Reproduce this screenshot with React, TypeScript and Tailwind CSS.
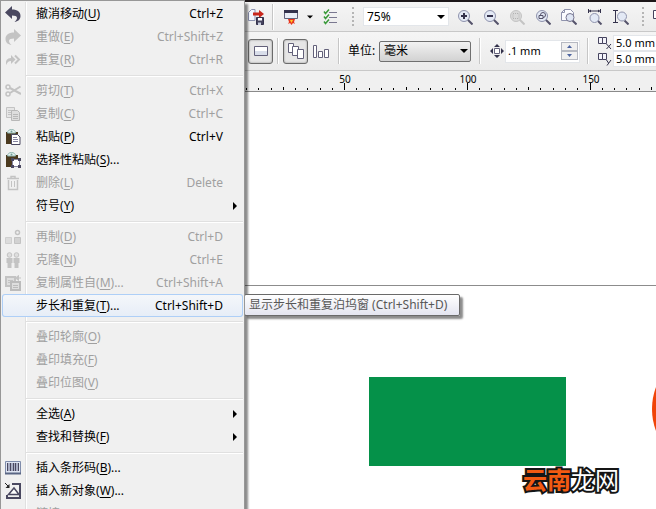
import type {ReactNode} from 'react';

interface MenuEntry {
  label: string;
  hotkey: string;
  suffix?: string;
  shortcut?: string;
  icon?: ReactNode;
  disabled?: boolean;
  submenu?: boolean;
  active?: boolean;
}

const DARK = '#4a4860';
const GREY = '#c3c3c3';

function Glyph({children, size = 16}: {children: ReactNode; size?: number}) {
  return (
    <svg width={size} height={size} viewBox={`0 0 ${size} ${size}`} fill="none" className="shrink-0" aria-hidden="true">
      {children}
    </svg>
  );
}

const undoPath = 'M0 6.500 7 0v3.500c5.500 0 8.500 2.500 8.500 6.500 0 3.500-2.500 5.500-6 6 1.500-1.200 2.500-2.500 2.500-4 0-1.800-2-2.500-5-2.500V13z';

const clipboard = (
  <>
    <path d="M1 3h12v12H1z" fill="#4b3a1f" />
    <path d="M2.500 4C2.500 1.500 4.500.5 6.500.5s4 1 4 3.500z" fill="#e8f4f2" stroke="#8fb5b0" />
    <circle cx="6.500" cy="2.500" r="1" fill="#6d9a95" />
  </>
);

const groups: MenuEntry[][] = [
  [
    {label: '撤消移动', hotkey: 'U', shortcut: 'Ctrl+Z', icon: <Glyph><path d={undoPath} fill={DARK} /></Glyph>},
    {
      label: '重做', hotkey: 'E', shortcut: 'Ctrl+Shift+Z', disabled: true,
      icon: <Glyph><path d={undoPath} fill={GREY} transform="matrix(-1 0 0 1 16 0)" /></Glyph>,
    },
    {
      label: '重复', hotkey: 'R', shortcut: 'Ctrl+R', disabled: true,
      icon: (
        <Glyph>
          <path d="M1.500 13C0 9 2 6 6 6V3l4.500 4.500L6 12V9C3.500 9 2 10.500 1.500 13z" fill={GREY} />
          <path d="m10 3.500 4 4-4 4" stroke={GREY} strokeWidth="2" />
        </Glyph>
      ),
    },
  ],
  [
    {
      label: '剪切', hotkey: 'T', shortcut: 'Ctrl+X', disabled: true,
      icon: (
        <Glyph>
          <circle cx="3" cy="4" r="2" stroke={GREY} strokeWidth="1.500" />
          <circle cx="3" cy="11" r="2" stroke={GREY} strokeWidth="1.500" />
          <path d="m5 5 11 6M5 10l10.500-6.500" stroke={GREY} strokeWidth="2" />
        </Glyph>
      ),
    },
    {
      label: '复制', hotkey: 'C', shortcut: 'Ctrl+C', disabled: true,
      icon: (
        <Glyph>
          <path d="M1.500 1.500h8v10h-8z" fill="#e6e6e6" stroke={GREY} />
          <path d="M3 4.500h4M3 6.500h3M3 8.500h3" stroke={GREY} />
          <path d="M6.500 4.500h6l2 2v8h-8z" fill="#dedede" stroke="#b8b8b8" />
          <path d="M8 8.500h5M8 10.500h5M8 12.500h5" stroke="#b8b8b8" />
        </Glyph>
      ),
    },
    {
      label: '粘贴', hotkey: 'P', shortcut: 'Ctrl+V',
      icon: (
        <Glyph>
          {clipboard}
          <path d="M6.500 5.500h6l2.500 2.500v7.500H6.500z" fill="#fff" stroke={DARK} />
          <path d="M8 8.500h4M8 10.500h5M8 12.500h5" stroke="#8583a0" />
        </Glyph>
      ),
    },
    {
      label: '选择性粘贴', hotkey: 'S', suffix: '...',
      icon: (
        <Glyph>
          {clipboard}
          <path d="M7.500 7.500h7v7h-7z" fill="#fff" stroke="#8583a0" />
          <path d="M6 6h3v3H6zM13 6h3v3h-3zM6 13h3v3H6zM13 13h3v3h-3z" fill={DARK} />
        </Glyph>
      ),
    },
    {
      label: '删除', hotkey: 'L', shortcut: 'Delete', disabled: true,
      icon: (
        <Glyph>
          <path d="M2 3.500h12M6 3V1.500h4V3M3.500 5v9.500h9V5" stroke={GREY} strokeWidth="1.500" />
          <path d="M6.500 6v6M9.500 6v6" stroke={GREY} />
        </Glyph>
      ),
    },
    {label: '符号', hotkey: 'Y', submenu: true},
  ],
  [
    {
      label: '再制', hotkey: 'D', shortcut: 'Ctrl+D', disabled: true,
      icon: (
        <Glyph>
          <path d="M.5 8.500h6v6h-6z" fill="#dcdcdc" stroke="#cfcfcf" />
          <path d="M9.500 8.500h6v6h-6z" fill="#d2d2d2" stroke={GREY} />
          <circle cx="12.500" cy="3.500" r="2" stroke={GREY} strokeWidth="1.500" />
        </Glyph>
      ),
    },
    {
      label: '克隆', hotkey: 'N', shortcut: 'Ctrl+E', disabled: true,
      icon: (
        <Glyph>
          <circle cx="4.500" cy="3" r="2.300" fill="#dedede" stroke={GREY} />
          <circle cx="11.500" cy="3" r="2.300" fill="#dedede" stroke={GREY} />
          <path d="M1.500 6h6v5H6.500v5h-4v-5h-1zM8.500 6h6v5h-1v5h-4v-5h-1z" fill={GREY} />
        </Glyph>
      ),
    },
    {
      label: '复制属性自', hotkey: 'M', suffix: '...', shortcut: 'Ctrl+Shift+A', disabled: true,
      icon: (
        <Glyph>
          <path d="M1 2h9v9H1z" fill="#dedede" stroke={GREY} strokeWidth="2" />
          <path d="M3 5.500h5M3 7.500h3" stroke={GREY} />
          <path d="M6 7h9v8H6z" fill="#dedede" stroke="#bbb" strokeWidth="2" />
          <path d="M8 10.500h5M8 12.500h5" stroke="#bbb" />
          <path d="M16 3h-3M13.500.5 10.500 3l3 2.500z" stroke={GREY} fill={GREY} />
        </Glyph>
      ),
    },
    {label: '步长和重复', hotkey: 'T', suffix: '...', shortcut: 'Ctrl+Shift+D', active: true},
  ],
  [
    {label: '叠印轮廓', hotkey: 'O', disabled: true},
    {label: '叠印填充', hotkey: 'F', disabled: true},
    {label: '叠印位图', hotkey: 'V', disabled: true},
  ],
  [
    {label: '全选', hotkey: 'A', submenu: true},
    {label: '查找和替换', hotkey: 'F', submenu: true},
  ],
  [
    {
      label: '插入条形码', hotkey: 'B', suffix: '...',
      icon: (
        <Glyph>
          <path d="M.5 1.500h15v12H.5z" fill="#dfe5f2" stroke="#7f8cab" />
          <path d="M0 13.500h16" stroke="#5a6684" strokeWidth="2" />
          <path d="M2 3h12v8H2z" fill="#a9aec4" />
          <path d="M2.500 3v8M5.500 3v8M8.500 3v8M10.500 3v8M13.500 3v8" stroke={DARK} />
        </Glyph>
      ),
    },
    {
      label: '插入新对象', hotkey: 'W', suffix: '...',
      icon: (
        <Glyph>
          <path d="M7 1h8v14H2v-3" stroke={DARK} strokeWidth="2" />
          <path d="m9 5 5 6.500H3.500z" fill="#fff" stroke={DARK} strokeWidth="1.500" />
          <path d="m0 0 3.500 3.500" stroke="#222" />
          <path d="M4.500 1v4h-4z" fill="#222" />
        </Glyph>
      ),
    },
    {label: '链接', hotkey: 'K', suffix: '...', disabled: true},
  ],
];

function MenuRow({entry}: {entry: MenuEntry}) {
  const tone = entry.disabled ? 'text-[#a0a0a0]' : 'text-black';
  const fill = entry.active
    ? 'rounded-[3px] bg-linear-to-b from-[#f5f7fa] to-[#e6edf7] shadow-[inset_0_0_0_1px_#aecff7]'
    : '';
  return (
    <button
      type="button"
      role="menuitem"
      disabled={entry.disabled}
      className={`flex h-[23px] w-full shrink-0 items-center text-left ${tone} ${fill}`}
    >
      <span
        className={`flex h-full w-6 shrink-0 items-center pl-[3px] ${
          entry.active ? '' : 'border-r border-[#e0e0e0] shadow-[1px_0_0_#fff]'
        }`}
      >
        {entry.icon}
      </span>
      <span className="flex-1 whitespace-nowrap pl-[10px]">
        {entry.label}(<span className="underline underline-offset-2">{entry.hotkey}</span>){entry.suffix}
      </span>
      {entry.shortcut && <span className="whitespace-nowrap pr-[20px]">{entry.shortcut}</span>}
      {entry.submenu && (
        <svg width="4" height="8" viewBox="0 0 4 8" className="mr-[6px]" aria-hidden="true">
          <path d="M0 0v8l4-4z" fill="#000" />
        </svg>
      )}
    </button>
  );
}

function EditMenu() {
  return (
    <div
      role="menu"
      className="relative z-10 flex w-[245px] shrink-0 flex-col border-x border-t border-[#979797] bg-[#f0f0f0] px-px pt-px shadow-[3px_4px_2px_rgba(0,0,0,0.45)]"
    >
      {groups.map((group, i) => (
        <div key={i} role="group" className="shrink-0">
          {i > 0 && (
            <div className="flex h-2">
              <span className="w-6 border-r border-[#e0e0e0] shadow-[1px_0_0_#fff]" />
              <span className="mt-[4px] h-[2px] flex-1 border-t border-b border-t-[#e0e0e0] border-b-white" />
            </div>
          )}
          {group.map((entry) => (
            <MenuRow key={entry.label} entry={entry} />
          ))}
        </div>
      ))}
    </div>
  );
}

function Divider() {
  return <span className="h-[26px] w-[2px] shrink-0 border-l border-r border-l-[#c6c6c6] border-r-white" />;
}

function Grip() {
  return <span className="h-[19px] w-0 shrink-0 border-l-2 border-dotted border-[#b5b5b5]" />;
}

function Caret({className = ''}: {className?: string}) {
  return (
    <svg width="8" height="4" viewBox="0 0 8 4" className={`shrink-0 ${className}`} aria-hidden="true">
      <path d="M0 0h8L4 4z" fill="#000" />
    </svg>
  );
}

function ToolButton({label, children, pressed}: {label: string; children: ReactNode; pressed?: boolean}) {
  return (
    <button
      type="button"
      aria-label={label}
      aria-pressed={pressed}
      className={`flex shrink-0 items-center justify-center ${
        pressed
          ? 'size-[25px] rounded-[3px] border border-[#6b6b6b] bg-[#e6e6e6] shadow-[inset_0_0_2px_#888]'
          : 'size-[18px]'
      }`}
    >
      {children}
    </button>
  );
}

function Lens({children, faded}: {children?: ReactNode; faded?: boolean}) {
  return (
    <Glyph>
      <path d="m10.500 10.500 5 5" stroke={faded ? '#c4c4c4' : '#55536b'} strokeWidth="2" />
      <circle cx="7" cy="7" r="5.500" fill={faded ? '#dadada' : '#e3e9f5'} stroke={faded ? '#c4c4c4' : '#8f93ad'} />
      {children}
    </Glyph>
  );
}

const zoomTools = [
  {
    label: '放大',
    icon: <Lens><path d="M7 4v6M4 7h6" stroke="#34324c" strokeWidth="2" /></Lens>,
  },
  {
    label: '缩小',
    icon: <Lens><path d="M4 7h6" stroke="#34324c" strokeWidth="2" /></Lens>,
  },
  {
    label: '缩放选定对象',
    icon: <Lens faded><path d="M4 4.500h6v5H4z" stroke="#b2b2b2" strokeDasharray="1 1" /></Lens>,
  },
  {
    label: '缩放全部对象',
    icon: (
      <Lens>
        <circle cx="8" cy="6" r="2.500" stroke="#55536b" />
        <path d="M4 6.500h4v3H4z" fill="#e3e9f5" stroke="#55536b" />
      </Lens>
    ),
  },
  {
    label: '显示页面',
    icon: (
      <Glyph>
        <path d="M3.500.5h6l3 3v8h-12v-8z" fill="#fbfcff" stroke="#8f93ad" />
        <path d="M3.500.5v3h-3" stroke="#8f93ad" />
        <path d="m11.500 11.500 4 4" stroke="#55536b" strokeWidth="2" />
        <circle cx="9" cy="8.500" r="4" fill="#dfe6f4" stroke="#77758e" />
      </Glyph>
    ),
  },
  {
    label: '按页宽显示',
    icon: (
      <Glyph>
        <path d="M1.500 0v4M13.500 0v4M2 2h11" stroke="#34324c" />
        <path d="M4 .5 2 2l2 1.500zM11 .5 13 2l-2 1.500z" fill="#34324c" />
        <path d="m10.500 11.500 4 4" stroke="#55536b" strokeWidth="2" />
        <circle cx="7.500" cy="9" r="4.500" fill="#e3e9f5" stroke="#8f93ad" />
      </Glyph>
    ),
  },
  {
    label: '按页高显示',
    icon: (
      <Glyph>
        <path d="M0 1.500h5M0 13.500h5M2.500 2v11" stroke="#34324c" />
        <path d="m11.500 11.500 4 4" stroke="#55536b" strokeWidth="2" />
        <circle cx="9" cy="7.500" r="4.500" fill="#e3e9f5" stroke="#8f93ad" />
      </Glyph>
    ),
  },
];

function StandardBar() {
  return (
    <div className="flex h-[30px] shrink-0 items-center overflow-hidden border-b border-[#c8c8c8] bg-linear-to-b from-[#f5f5f5] to-[#ebebeb]">
      <div className="ml-[2px]">
        <ToolButton label="导出">
          <Glyph>
            <path d="M.5 3.500 3.500.5H7v11H.5z" fill="#f4f7ff" stroke="#8d93b0" />
            <path d="M5 3.500h6V1l5 4-5 4V6.500H5z" fill="#c8261c" />
            <path d="M8.500 8.500h7v7h-7z" fill="#45435e" stroke="#34324c" />
            <path d="M10 9h4v2.500h-4z" fill="#fff" />
            <path d="M10 13.500h3V16h-3z" fill="#c9cfdf" />
          </Glyph>
        </ToolButton>
      </div>
      <span className="ml-[7px] flex"><Divider /></span>
      <div className="ml-[8px] flex items-center">
        <ToolButton label="应用程序启动器">
          <Glyph>
            <path d="M1.500 1.500h13v8h-13z" fill="#e9edf6" stroke="#63617a" />
            <path d="M1 1h14v3H1z" fill="#34324c" />
            <path d="M5 10h7l-1 3 1 2-2-1-1.500 2L7 14l-2 1 1-2z" fill="#e8341c" />
            <path d="M7 11h3l-1.500 3z" fill="#ffc928" />
          </Glyph>
        </ToolButton>
        <Caret className="ml-[7px] w-[6px]" />
      </div>
      <div className="ml-[9px]">
        <ToolButton label="选项">
          <Glyph>
            <path d="m1 2.500 1.500 2L6 .5M1 7.500l1.500 2L6 5.500M1 12.500l1.500 2L6 10.500" stroke="#3a9a3a" strokeWidth="1.500" />
            <path d="M6 3.500h8M6 8.500h8M6 13.500h8" stroke="#7a7890" />
          </Glyph>
        </ToolButton>
      </div>
      <span className="ml-[12px] flex"><Grip /></span>
      <div className="relative ml-[9px] flex shrink-0 items-center">
        <select aria-label="缩放级别" defaultValue="75%" className="h-[19px] w-[86px] appearance-none border border-[#e3e6ea] bg-white pl-[3px] text-xs leading-4">
          <option>75%</option>
          <option>100%</option>
        </select>
        <Caret className="pointer-events-none absolute right-[4px]" />
      </div>
      <div className="ml-[7px] flex gap-[8px]">
        {zoomTools.map((tool) => (
          <ToolButton key={tool.label} label={tool.label}>{tool.icon}</ToolButton>
        ))}
      </div>
      <span className="ml-[12px] flex"><Grip /></span>
      <div className="ml-[8px]">
        <ToolButton label="贴齐">
          <Glyph><path d="M.5 1.500h9v8h-9z" fill="#fff" stroke="#45435e" /></Glyph>
        </ToolButton>
      </div>
    </div>
  );
}

function OffsetIcon({axis}: {axis: 'X' | 'Y'}) {
  return (
    <svg width="14" height="14" viewBox="0 0 14 14" fill="none" className="shrink-0" aria-hidden="true">
      <path d="M.5 1.500h4v6h-4z" fill="#f4f4fa" stroke="#45435e" />
      <path d="M4.500 1.500h4v6h-4z" fill="#f4f4fa" stroke="#45435e" />
      <path d={axis === 'X' ? 'm8.500 8 4.500 5M13 8l-4.500 5' : 'm8.500 8 2 3M13 8l-4 5.500'} stroke="#34324c" />
    </svg>
  );
}

function PropertyBar() {
  return (
    <div className="flex h-[39px] shrink-0 items-center overflow-hidden border-b border-[#c8c8c8] bg-linear-to-b from-[#f5f5f5] to-[#ebebeb]">
      <div className="ml-[3px]">
        <ToolButton label="当前页" pressed>
          <Glyph>
            <path d="M1.500 3.500h13v9h-13z" fill="#fff" stroke="#63617a" />
            <path d="M2 8h12v4H2z" fill="#d9deea" />
          </Glyph>
        </ToolButton>
      </div>
      <span className="ml-[4px] flex"><Divider /></span>
      <div className="ml-[4px] flex items-center gap-[4px]">
        <ToolButton label="所有对象" pressed>
          <Glyph>
            <path d="M.5.5h5v9h-5z" fill="#fff" stroke="#63617a" />
            <path d="M4.500 3.500h6v9h-6z" fill="#fff" stroke="#63617a" />
            <path d="M9.500 6.500h6v9h-6z" fill="#fff" stroke="#63617a" />
          </Glyph>
        </ToolButton>
        <ToolButton label="对象对齐">
          <Glyph>
            <path d="M.5 2.500h3v12h-3zM5.500 8.500h4v6h-4zM11.500 6.500h4v8h-4z" fill="#fff" stroke="#63617a" />
          </Glyph>
        </ToolButton>
      </div>
      <span className="ml-[8px] flex"><Divider /></span>
      <label htmlFor="unit" className="ml-[8px] w-[31px] shrink-0 whitespace-nowrap text-xs">单位:</label>
      <div className="relative flex shrink-0 items-center">
        <select
          id="unit"
          className="h-[21px] w-[92px] appearance-none rounded-[2px] border border-[#707070] bg-linear-to-b from-[#f2f2f2] to-[#d2d2d2] pl-[4px] text-xs leading-4"
        >
          <option>毫米</option>
          <option>英寸</option>
        </select>
        <Caret className="pointer-events-none absolute right-[3px]" />
      </div>
      <span className="ml-[8px] flex"><Divider /></span>
      <label htmlFor="nudge" aria-label="微调偏移" className="ml-[8px] shrink-0">
        <Glyph>
          <path d="M5.500 5.500h5v5h-5z" fill="#fff" stroke="#63617a" />
          <path d="m8 1 3 3H5zM8 15l3-3H5zM1 8l3-3v6zM15 8l-3-3v6z" fill="#34324c" />
        </Glyph>
      </label>
      <div className="flex h-[23px] w-[75px] shrink-0 items-center border border-[#e3e6ea] bg-white">
        <input id="nudge" defaultValue=".1 mm" className="w-[55px] pl-[2px] text-[11px] leading-4 outline-none" />
        <span className="flex flex-col">
          <button type="button" aria-label="增加" className="flex h-[9px] w-[17px] items-center justify-center border border-[#b6b9c2] bg-[#f0f0f0]">
            <svg width="5" height="3" viewBox="0 0 5 3"><path d="M0 3h5L2.500 0z" fill="#4c63a0" /></svg>
          </button>
          <button type="button" aria-label="减少" className="flex h-[9px] w-[17px] items-center justify-center border border-[#b6b9c2] bg-[#f0f0f0]">
            <svg width="5" height="3" viewBox="0 0 5 3"><path d="M0 0h5L2.500 3z" fill="#4c63a0" /></svg>
          </button>
        </span>
      </div>
      <span className="ml-[7px] flex"><Divider /></span>
      <div className="ml-[9px] flex flex-col">
        {(['X', 'Y'] as const).map((axis) => (
          <div key={axis} className="flex items-center">
            <label htmlFor={`offset${axis}`} aria-label={`再制距离 ${axis}`}><OffsetIcon axis={axis} /></label>
            <input
              id={`offset${axis}`}
              defaultValue="5.0 mm"
              className="ml-px h-4 w-[60px] border border-[#e3e6ea] bg-white pl-[2px] text-[11px] leading-4 outline-none"
            />
          </div>
        ))}
      </div>
    </div>
  );
}

// ruler: 5 mm per minor tick, labels every 50 mm
const ticks = Array.from({length: 60}, (_, i) => ({mm: 10 + i * 5, x: Math.round(1 + i * 12.27)}));

function Ruler() {
  return (
    <div className="h-[21px] shrink-0 overflow-hidden border-b border-[#8a8a8a] bg-[#f0f0f0]">
      <svg width="800" height="20" viewBox="0 0 800 20" aria-label="标尺" className="max-w-none">
        {ticks.map(({mm, x}) => {
          const top = mm % 50 === 0 ? 12 : mm % 25 === 0 ? 16 : 17;
          return (
            <g key={mm}>
              <path d={`M${x + 0.5} ${top}v${19 - top}`} stroke="#000" />
              {mm % 50 === 0 && (
                <text x={x + 1} y="12" textAnchor="middle" fontSize="10" fill="#000">{mm}</text>
              )}
            </g>
          );
        })}
      </svg>
    </div>
  );
}

function Canvas() {
  return (
    <main className="relative flex-1 overflow-hidden bg-white">
      <div className="absolute inset-x-0 top-[193px] h-px bg-[#8c8c8c]" />
      <div className="absolute left-[124px] top-[285px] h-[89px] w-[197px] bg-[#059149]" />
      <div className="absolute left-[407px] top-[255px] size-[124px] rounded-full bg-[#f04408]" />
      <div className="absolute left-[278px] top-[370px] whitespace-nowrap text-2xl font-bold leading-[36px] [-webkit-text-stroke:4px_#151515] [paint-order:stroke_fill]">
        <span className="text-[#f35a12]">云南</span>
        <span className="font-normal text-white">龙网</span>
      </div>
      <div
        role="tooltip"
        className="absolute -left-px top-[202px] z-20 whitespace-nowrap rounded-[2px] border border-[#6a6a6a] bg-linear-to-b from-white to-[#e4e5f0] pl-1 pr-3 text-xs leading-5 text-[#575757] shadow-[3px_3px_2px_rgba(0,0,0,0.45)]"
      >
        显示步长和重复泊坞窗 (Ctrl+Shift+D)
      </div>
    </main>
  );
}

export default function App() {
  return (
    <div className="flex h-screen overflow-hidden bg-white font-['Noto_Sans','Noto_Sans_CJK_SC',sans-serif] text-xs text-black">
      <EditMenu />
      <div className="flex min-w-0 flex-1 flex-col border-t-2 border-[#1c1719]">
        <StandardBar />
        <PropertyBar />
        <Ruler />
        <Canvas />
      </div>
    </div>
  );
}
